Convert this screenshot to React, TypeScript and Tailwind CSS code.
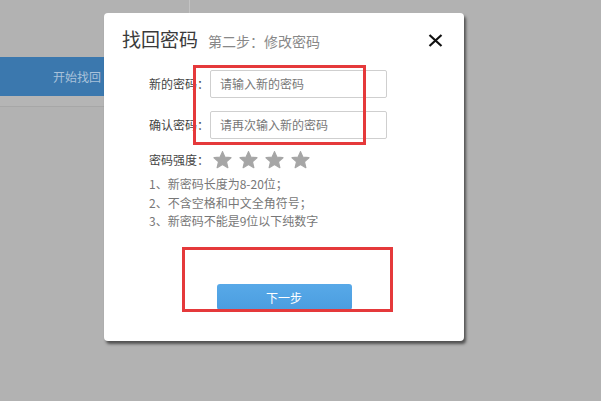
import React from "react";

const Star = () => (
  <svg width="19" height="18" viewBox="0 0 24 23" className="block">
    <path
      d="M12 0.8l3.1 7.1 7.7 0.7-5.8 5.1 1.8 7.6L12 17.3l-6.8 4 1.8-7.6-5.8-5.1 7.7-0.7z"
      fill="#a6a6a6"
      stroke="#a6a6a6"
      strokeWidth="1.6"
      strokeLinejoin="round"
    />
  </svg>
);

export default function App() {
  const font = { fontFamily: '"Noto Sans CJK SC", "Noto Sans", sans-serif' };
  return (
    <div className="relative w-[601px] h-[401px] overflow-hidden bg-[#b2b2b2]" style={font}>
      {/* underlying page */}
      <div className="flex w-[190px] flex-col">
        <div className="h-[13px] w-[190px] border-r border-[#c3c3c3]" />
        <div className="h-[44px]" />
        <div className="flex h-[39px] items-center justify-end whitespace-nowrap bg-[#3b78ae] pr-[89px] text-[12px] text-[#a9c2db]">
          开始找回
        </div>
        <div className="h-[11px] border-b border-[#a7a7a7] bg-[#b5b5b5]" />
      </div>

      {/* modal */}
      <div className="absolute left-[104px] top-[13px] flex h-[328px] w-[360px] flex-col rounded-[4px] bg-white shadow-[2px_3px_3px_rgba(0,0,0,0.55)]">
        <div className="flex items-center whitespace-nowrap pl-[18px] pr-[21px] pt-[12px]">
          <span className="text-[19px] font-normal leading-[28px] text-[#3a3a3a]">找回密码</span>
          <span className="ml-[10px] mt-[3px] text-[14px] leading-[20px] text-[#888]">第二步：修改密码</span>
          <svg width="15" height="13" viewBox="0 0 15 13" className="ml-auto mt-[2px]">
            <path d="M1.5 1L13.5 12M13.5 1L1.5 12" stroke="#111" strokeWidth="2.2" />
          </svg>
        </div>

        <div className="flex flex-col pl-[45px] pt-[17px]">
          <div className="flex items-center">
            <span className="w-[61px] shrink-0 whitespace-nowrap text-[12px] text-[#444]">新的密码：</span>
            <div className="flex h-[28px] w-[177px] items-center whitespace-nowrap rounded-[2px] border border-[#cfcfcf] pl-[9px] text-[12px] text-[#777]">
              请输入新的密码
            </div>
          </div>
          <div className="mt-[13px] flex items-center">
            <span className="w-[61px] shrink-0 whitespace-nowrap text-[12px] text-[#444]">确认密码：</span>
            <div className="flex h-[28px] w-[177px] items-center whitespace-nowrap rounded-[2px] border border-[#cfcfcf] pl-[9px] text-[12px] text-[#777]">
              请再次输入新的密码
            </div>
          </div>
          <div className="mt-[10px] flex h-[22px] items-center">
            <span className="w-[64px] shrink-0 whitespace-nowrap text-[12px] text-[#444]">密码强度：</span>
            <div className="flex gap-[7px]">
              <Star />
              <Star />
              <Star />
              <Star />
            </div>
          </div>
          <div className="mt-[4px] flex flex-col whitespace-nowrap text-[12px] leading-[18.5px] text-[#777]">
            <span>1、新密码长度为8-20位；</span>
            <span>2、不含空格和中文全角符号；</span>
            <span>3、新密码不能是9位以下纯数字</span>
          </div>
        </div>

        <div className="mt-[53px] flex justify-center">
          <div className="flex h-[26px] w-[135px] items-center justify-center whitespace-nowrap rounded-[3px] bg-gradient-to-b from-[#58a9e8] to-[#4b9de0] pt-[2px] text-[12px] text-white">
            下一步
          </div>
        </div>
      </div>

      {/* annotation boxes */}
      <div className="absolute left-[193px] top-[65px] h-[80px] w-[173px] border-[3px] border-[#e5393b]" />
      <div className="absolute left-[182px] top-[247px] h-[65px] w-[211px] border-[3px] border-[#e5393b]" />
    </div>
  );
}
